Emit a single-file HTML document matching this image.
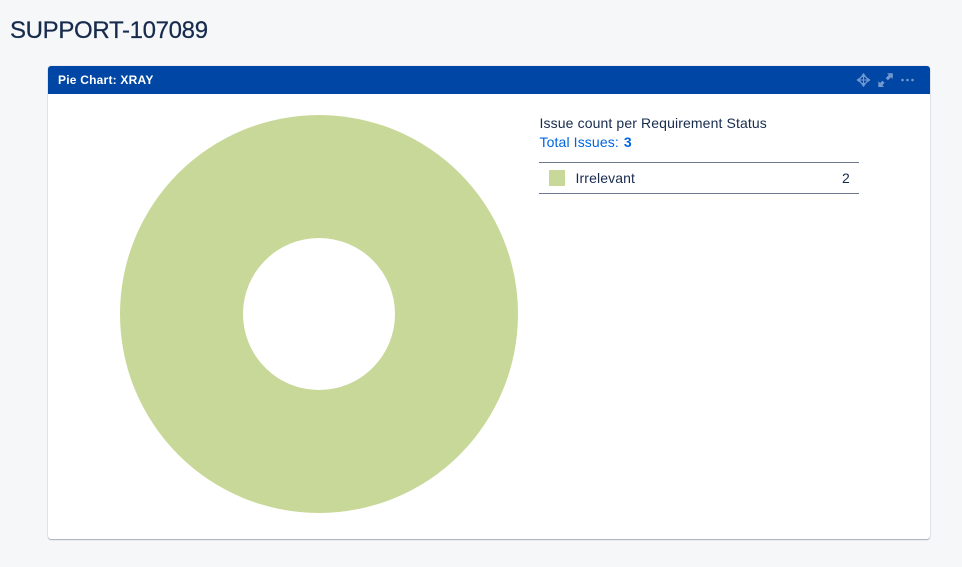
<!DOCTYPE html>
<html>
<head>
<meta charset="utf-8">
<style>
html,body{margin:0;padding:0}
body{width:962px;height:567px;background:#f6f7f9;overflow:hidden;position:relative;font-family:"Liberation Sans",sans-serif;color:#172b4d}
.t{position:absolute;white-space:nowrap}
#card{position:absolute;left:48px;top:66px;width:882px;height:473px;background:#fff;border-radius:3px;box-shadow:0 1px 1px rgba(9,30,66,.3),0 0 1px rgba(9,30,66,.3)}
#bar{position:absolute;left:48px;top:66px;width:882px;height:28px;background:#0046a5;border-radius:3px 3px 0 0}
.b{font-size:14px;line-height:16px;letter-spacing:.12px;color:#172b4d}
</style>
</head>
<body>
<div class="t" style="left:10px;top:16px;font-size:24px;line-height:30px;letter-spacing:-.33px;color:#172b4d;-webkit-text-stroke:.25px #172b4d">SUPPORT-107089</div>
<div id="card"></div>
<div id="bar"></div>
<div class="t" style="left:58px;top:72px;font-size:12px;line-height:16px;font-weight:bold;letter-spacing:.22px;color:#fff">Pie Chart: XRAY</div>
<svg style="position:absolute;left:850px;top:68px" width="70" height="24" viewBox="0 0 70 24" fill="none" stroke="#7299d0" stroke-width="1.400">
<path d="M13.500 5.500v13M7 12h13" stroke-width="1.100"/>
<circle cx="13.500" cy="12" r="3.800"/>
<path d="M11.200 7.800l2.300-2.800 2.300 2.800zM11.200 16.200l2.300 2.800 2.300-2.800zM9.300 9.700L6.500 12l2.800 2.300zM17.700 9.700l2.800 2.300-2.800 2.300z" fill="#7299d0" stroke="none"/>
<path d="M42.800 5.200h-5.800l1.800 1.800-3.100 3.100 2.200 2.200 3.100-3.100 1.800 1.800z" fill="#7299d0" stroke="none"/>
<path d="M28.300 19h5.800l-1.800-1.800 2.300-2.300-2.200-2.200-2.300 2.300-1.800-1.800z" fill="#7299d0" stroke="none"/>
<circle cx="52.500" cy="12" r="1.300" fill="#7299d0" stroke="none"/>
<circle cx="57.500" cy="12" r="1.300" fill="#7299d0" stroke="none"/>
<circle cx="62.500" cy="12" r="1.300" fill="#7299d0" stroke="none"/>
</svg>
<svg style="position:absolute;left:120px;top:115px" width="398" height="398" viewBox="0 0 398 398">
<path fill="#c8d898" fill-rule="evenodd" d="M199 0a199 199 0 1 0 0 398a199 199 0 1 0 0-398zM199 123a76 76 0 1 1 0 152a76 76 0 1 1 0-152z"/>
</svg>
<div class="t b" style="left:539.500px;top:115px">Issue count per Requirement Status</div>
<div class="t b" style="left:539.500px;top:134px;color:#0065e0">Total Issues: <b style="margin-left:1px">3</b></div>
<div style="position:absolute;left:539px;top:162px;width:320px;height:1px;background:#6b778c"></div>
<div style="position:absolute;left:549px;top:170px;width:16px;height:16px;background:#c8d898"></div>
<div class="t b" style="left:575.500px;top:170px">Irrelevant</div>
<div class="t b" style="left:842px;top:170px">2</div>
<div style="position:absolute;left:539px;top:193px;width:320px;height:1px;background:#6b778c"></div>
</body>
</html>
